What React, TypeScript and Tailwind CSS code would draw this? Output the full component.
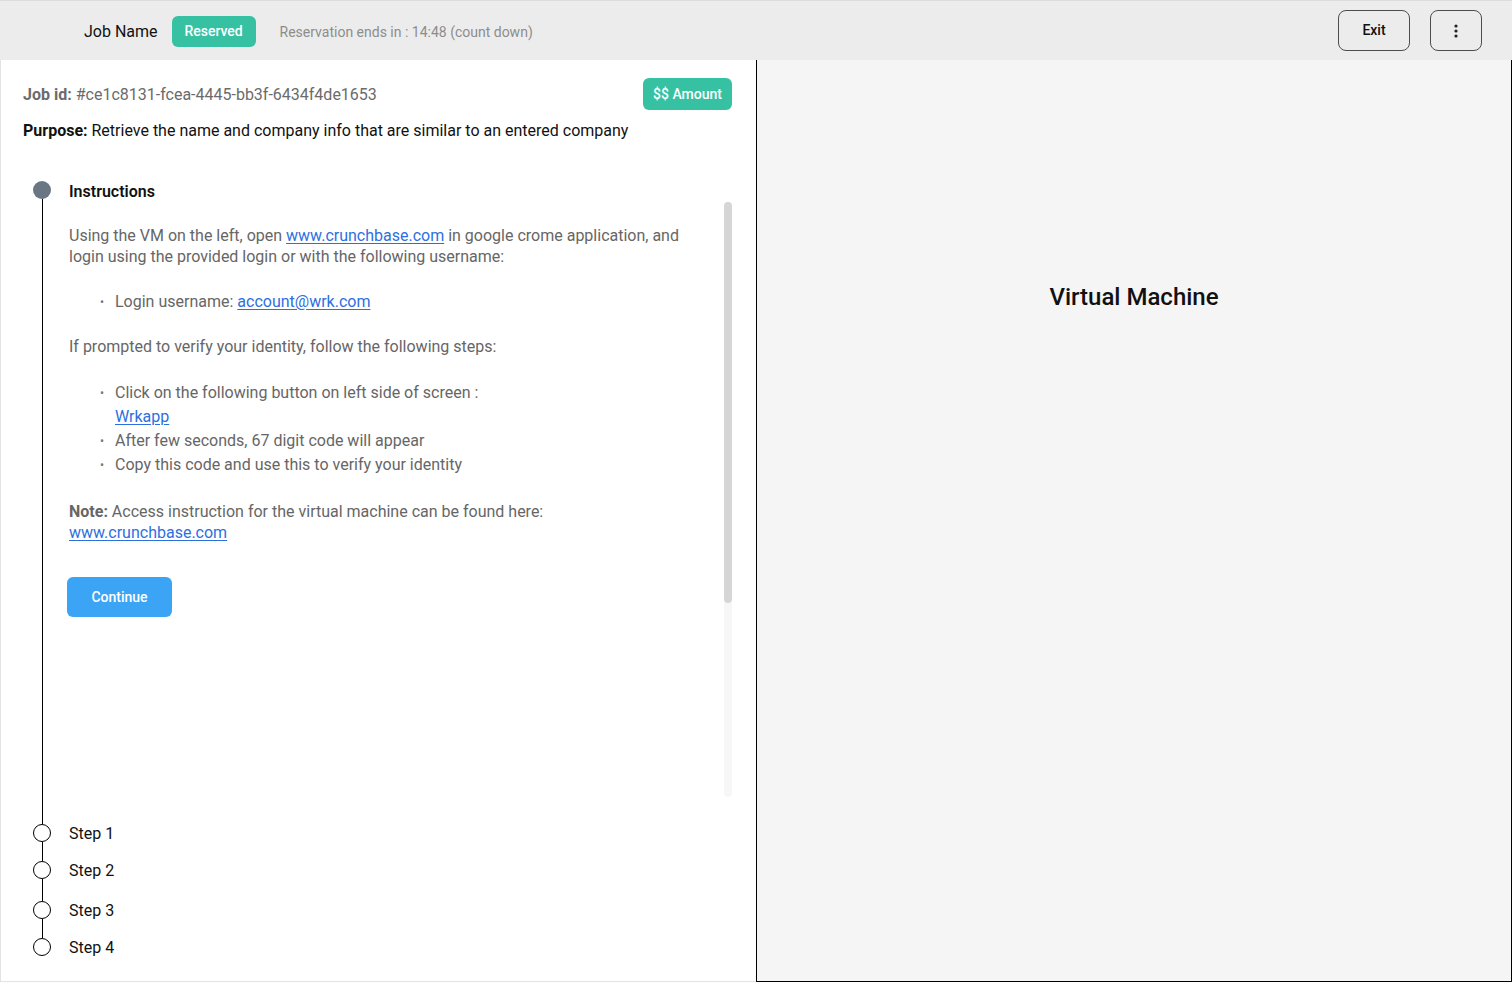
import React from "react";

const font = { fontFamily: "Roboto, 'Noto Sans', Arial, sans-serif" };

function StepRow({ label, last, top = 10, h = 38 }: { label: string; last?: boolean; top?: number; h?: number }) {
  return (
    <div className="flex" style={{ height: h }}>
      <div className="flex w-[18px] flex-col items-center">
        <div className="w-px bg-black" style={{ height: top }} />
        <div className="h-[18px] w-[18px] shrink-0 rounded-full border-[1.5px] border-black bg-white" />
        {last ? <div className="flex-1" /> : <div className="w-px flex-1 bg-black" />}
      </div>
      <div className="ml-[18px] flex items-start text-[16px] leading-[20px] text-[#111]" style={{ paddingTop: top }}>
        {label}
      </div>
    </div>
  );
}

function Bullet({ children }: { children: React.ReactNode }) {
  return (
    <li className="flex">
      <span className="w-[14px] shrink-0 pl-[31px] text-[12px] text-[#777]" style={{ boxSizing: "content-box" }}>
        •
      </span>
      <span className="pl-[1px]">{children}</span>
    </li>
  );
}

export default function App() {
  const link = "text-[#2e6fe0] underline underline-offset-2 decoration-1";
  return (
    <div className="flex h-[982px] w-[1512px] flex-col overflow-hidden bg-white" style={font}>
      {/* Header */}
      <header className="flex h-[60px] shrink-0 items-center border-t border-[#dcdcdc] bg-[#ececec] pl-[84px] pr-[30px] pt-[2px]">
        <span className="text-[16px] text-[#111]">Job Name</span>
        <span className="ml-[14px] flex h-[31px] w-[84px] items-center justify-center rounded-[6px] bg-[#36c1a3] text-[14px] font-medium text-white">
          Reserved
        </span>
        <span className="ml-[24px] pt-[2px] text-[14px] text-[#8c8c8c]">Reservation ends in : 14:48 (count down)</span>
        <div className="ml-auto flex items-center gap-[20px] pb-[2px]">
          <button className="flex h-[41px] w-[72px] items-center justify-center rounded-[8px] border-[1.5px] border-[#4d4d4d] text-[14px] font-medium text-[#111]">
            Exit
          </button>
          <button className="flex h-[41px] w-[52px] items-center justify-center rounded-[8px] border-[1.5px] border-[#4d4d4d]">
            <svg width="4" height="14" viewBox="0 0 4 14">
              <circle cx="2" cy="2" r="1.6" fill="#222" />
              <circle cx="2" cy="7" r="1.6" fill="#222" />
              <circle cx="2" cy="12" r="1.6" fill="#222" />
            </svg>
          </button>
        </div>
      </header>

      <div className="flex min-h-0 flex-1">
        {/* Left panel */}
        <section className="flex w-[756px] shrink-0 flex-col border-b border-l border-[#e3e3e3] pl-[22px] pr-[24px] pt-[18px]">
          <div className="flex items-center justify-between">
            <div className="pt-[2px] text-[16px] text-[#6b6b6b]">
              <span className="font-bold">Job id:</span> #ce1c8131-fcea-4445-bb3f-6434f4de1653
            </div>
            <span className="flex h-[32px] w-[89px] items-center justify-center rounded-[6px] bg-[#36c1a3] text-[14px] font-medium text-white">
              $$ Amount
            </span>
          </div>
          <div className="mt-[10px] text-[16px] leading-[21px] text-[#111]">
            <span className="font-bold">Purpose:</span> Retrieve the name and company info that are similar to an entered company
          </div>

          {/* Timeline */}
          <div className="ml-[10px] mt-[40px] flex flex-col">
            <div className="flex h-[18px]">
              <div className="flex w-[18px] flex-col items-center">
                <div className="h-[18px] w-[18px] rounded-full bg-[#6a7684]" />
              </div>
              <div className="ml-[18px] flex items-center pt-[3px] text-[16px] font-semibold text-[#111]">Instructions</div>
            </div>

            <div className="flex h-[615px]">
              <div className="flex w-[18px] justify-center">
                <div className="h-full w-px bg-black" />
              </div>
              <div className="ml-[18px] flex flex-1">
                <div className="flex-1 pt-[26px] text-[16px] text-[#666]">
                  <p className="leading-[21px]">
                    Using the VM on the left, open <a className={link}>www.crunchbase.com</a> in google crome application, and
                    <br />
                    login using the provided login or with the following username:
                  </p>
                  <ul className="mt-[23px] leading-[24px]">
                    <Bullet>
                      Login username: <a className={link}>account@wrk.com</a>
                    </Bullet>
                  </ul>
                  <p className="mt-[22px] leading-[21px]">If prompted to verify your identity, follow the following steps:</p>
                  <ul className="mt-[24px] leading-[24px]">
                    <Bullet>
                      Click on the following button on left side of screen :
                      <br />
                      <a className={link}>Wrkapp</a>
                    </Bullet>
                    <Bullet>After few seconds, 67 digit code will appear</Bullet>
                    <Bullet>Copy this code and use this to verify your identity</Bullet>
                  </ul>
                  <p className="mt-[24px] leading-[21px]">
                    <span className="font-bold">Note:</span> Access instruction for the virtual machine can be found here:
                    <br />
                    <a className={link}>www.crunchbase.com</a>
                  </p>
                  <button className="-ml-[2px] mt-[34px] flex h-[40px] w-[105px] items-center justify-center rounded-[6px] bg-[#3ba4f5] text-[14px] font-medium text-white">
                    Continue
                  </button>
                </div>
                <div className="mt-[3px] flex h-[595px] w-[8px] flex-col rounded-[4px] bg-[#f7f7f7]">
                  <div className="h-[401px] w-full rounded-[4px] bg-[#d6d6d6]" />
                </div>
              </div>
            </div>

            <StepRow label="Step 1" top={10} h={37} />
            <StepRow label="Step 2" top={10} h={40} />
            <StepRow label="Step 3" top={10} h={37} />
            <StepRow label="Step 4" top={10} last />
          </div>
        </section>

        {/* Right panel */}
        <section className="flex flex-1 justify-center border-b border-l border-r border-black bg-[#f5f5f5] pt-[222px]">
          <h1 className="text-[24px] font-medium leading-[30px] text-[#111]">Virtual Machine</h1>
        </section>
      </div>
    </div>
  );
}
